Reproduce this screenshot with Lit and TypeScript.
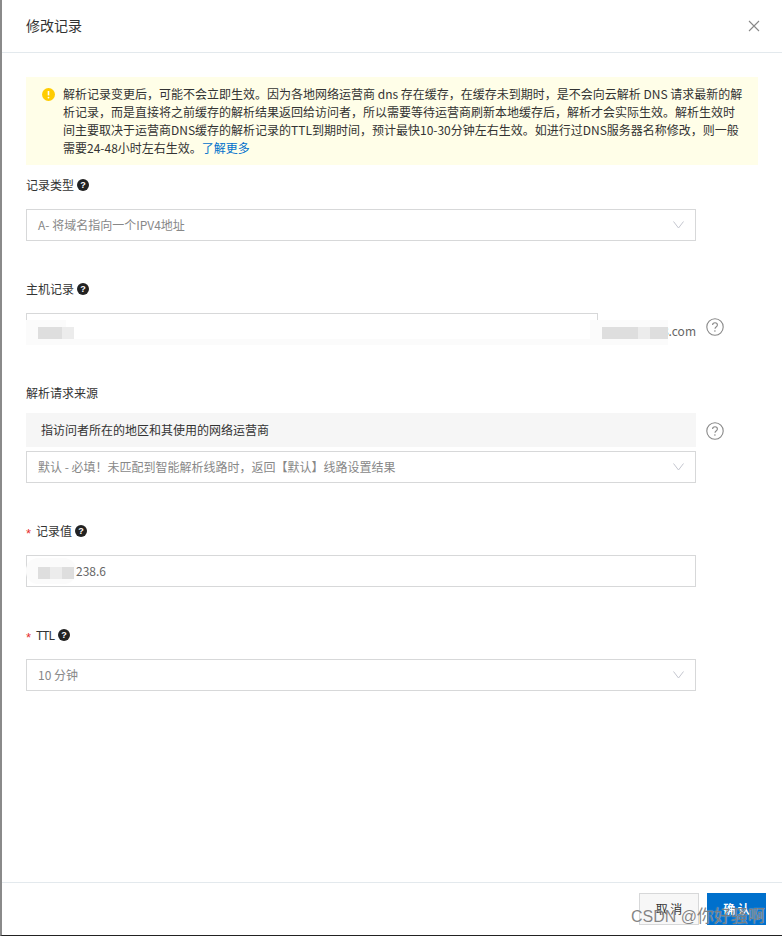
import { LitElement, html, css } from "lit";
import { customElement } from "lit/decorators.js";

const chevron = html`<svg class="chev" width="11" height="8" viewBox="0 0 11 8"><path d="M.5 .5l5 6.5 5-6.5" fill="none" stroke="#c4c6cf" stroke-width="1"/></svg>`;
const tip = html`<svg class="tip" width="12" height="12" viewBox="0 0 12 12"><circle cx="6" cy="6" r="6" fill="#222"/><text x="6" y="9.2" text-anchor="middle" font-size="9" font-weight="700" fill="#fff" font-family="Liberation Sans, sans-serif">?</text></svg>`;
const help = html`<svg class="help" width="18" height="18" viewBox="0 0 18 18"><circle cx="9" cy="9" r="8.2" fill="none" stroke="#888" stroke-width="1.1"/><path d="M6.6 7.1c0-1.4 1-2.3 2.4-2.3s2.4.9 2.4 2.2c0 1-.6 1.5-1.3 2-.7.5-1.1.9-1.1 1.8" fill="none" stroke="#888" stroke-width="1.1"/><circle cx="8.9" cy="13" r=".8" fill="#888"/></svg>`;

@customElement("app-root")
export class AppRoot extends LitElement {
  static styles = css`
    :host {
      display: flex;
      flex-direction: column;
      position: relative;
      width: 782px;
      height: 936px;
      box-sizing: border-box;
      overflow: hidden;
      background: #fff;
      border-left: 2px solid #8a8a8a;
      border-bottom: 1px solid #222;
      font-family: "Noto Sans CJK SC", "Liberation Sans", sans-serif;
      font-size: 12px;
      line-height: 18px;
      color: #333;
    }
    .head {
      height: 52px;
      flex: none;
      display: flex;
      align-items: center;
      justify-content: space-between;
      padding: 0 22px 0 24px;
      border-bottom: 1px solid #e3e9ed;
      font-size: 14px;
      box-sizing: content-box;
    }
    .title { margin-top: -3px; }
    .body {
      flex: 1;
      padding: 24px 24px 0;
    }
    .alert {
      display: flex;
      height: 88px;
      box-sizing: border-box;
      padding: 8px 0 8px 16px;
      gap: 8px;
      background: #fffee8;
      white-space: nowrap;
    }
    .warn { flex: none; margin-top: 3px; }
    a { color: #0070cc; text-decoration: none; }
    .label {
      display: flex;
      align-items: center;
      gap: 3px;
      height: 18px;
      margin-bottom: 15px;
    }
    .label .star {
      color: #e62e2e;
      width: 7px;
      font-family: "Liberation Sans", sans-serif;
      font-size: 13px;
      padding-top: 5px;
    }
    .ttl { letter-spacing: -1px; margin-right: 1px; }
    .field { margin-bottom: 39px; }
    .first { margin-top: 11px; }
    .short { margin-bottom: 11px; }
    .box {
      width: 670px;
      height: 32px;
      box-sizing: border-box;
      border: 1px solid #d7d8d9;
      padding: 0 11px;
      display: flex;
      align-items: center;
      justify-content: space-between;
      color: #888;
      background: #fff;
    }
    .row { display: flex; align-items: center; }
    .row .help { margin-left: 10px; flex: none; margin-top: 2px; }
    .host-row { height: 32px; width: 698px; justify-content: flex-start; }
    .host-row .help { margin-top: -4px; }
    .host-input { width: 572px; flex: none; }
    .suffix { flex: 1; text-align: right; color: #666; padding-top: 3px; }
    .bar {
      width: 670px;
      height: 34px;
      box-sizing: border-box;
      background: #f6f6f6;
      padding: 0 15px;
      display: flex;
      align-items: center;
    }
    .gap4 { margin-top: 4px; }
    .value { color: #666; padding-left: 38px; }
    .foot {
      flex: none;
      height: 53px;
      box-sizing: border-box;
      border-top: 1px solid #e3e9ed;
      padding: 10px 16px 0 0;
      display: flex;
      justify-content: flex-end;
      gap: 8px;
    }
    .btn {
      width: 60px;
      height: 32px;
      box-sizing: border-box;
      display: flex;
      align-items: center;
      justify-content: center;
      border: 1px solid #d7d8d9;
      background: #f7f7f7;
      color: #333;
    }
    .btn.primary {
      width: 59px;
      border-color: #0070cc;
      background: #0070cc;
      color: #fff;
      font-weight: 700;
    }
    /* overlays: redaction smears and the image watermark */
    .smear { position: absolute; background: #fbfbfb; }
    .px { position: absolute; background: #dedede; height: 12px; }
    .px.lt { background: #ececec; }
    .mark {
      position: absolute;
      left: 629px;
      top: 905px;
      font-family: "Liberation Sans", "Noto Sans CJK SC", sans-serif;
      font-size: 16px;
      line-height: 24px;
      color: rgba(115, 115, 115, 0.88);
      text-shadow: 0 0 1px rgba(255, 255, 255, 0.7);
      white-space: nowrap;
    }
    .mark span { font-size: 17px; }
  `;

  render() {
    return html`
      <div class="head">
        <span class="title">修改记录</span>
        <svg width="12" height="12" viewBox="0 0 12 12"><path d="M1 1l10 10M11 1L1 11" stroke="#888" stroke-width="1.1" fill="none"/></svg>
      </div>
      <div class="body">
        <div class="alert">
          <svg class="warn" width="13" height="13" viewBox="0 0 13 13"><circle cx="6.5" cy="6.5" r="6.5" fill="#fc0"/><path d="M6.5 3v4.4" stroke="#fff" stroke-width="1.6"/><circle cx="6.5" cy="9.6" r=".9" fill="#fff"/></svg>
          <div>解析记录变更后，可能不会立即生效。因为各地网络运营商 dns 存在缓存，在缓存未到期时，是不会向云解析 DNS 请求最新的解<br>析记录，而是直接将之前缓存的解析结果返回给访问者，所以需要等待运营商刷新本地缓存后，解析才会实际生效。解析生效时<br>间主要取决于运营商DNS缓存的解析记录的TTL到期时间，预计最快10-30分钟左右生效。如进行过DNS服务器名称修改，则一般<br>需要24-48小时左右生效。<a href="#">了解更多</a></div>
        </div>

        <div class="field first">
          <div class="label">记录类型 ${tip}</div>
          <div class="box"><span>A- 将域名指向一个IPV4地址</span>${chevron}</div>
        </div>

        <div class="field">
          <div class="label">主机记录 ${tip}</div>
          <div class="row host-row">
            <div class="box host-input"></div>
            <span class="suffix">8.com</span>
            ${help}
          </div>
        </div>

        <div class="field">
          <div class="label short">解析请求来源</div>
          <div class="row"><div class="bar">指访问者所在的地区和其使用的网络运营商</div>${help}</div>
          <div class="box gap4"><span>默认 - 必填！未匹配到智能解析线路时，返回【默认】线路设置结果</span>${chevron}</div>
        </div>

        <div class="field">
          <div class="label"><span class="star">*</span>记录值 ${tip}</div>
          <div class="box"><span class="value">238.6</span></div>
        </div>

        <div class="field">
          <div class="label"><span class="star">*</span><span class="ttl">TTL</span> ${tip}</div>
          <div class="box"><span>10 分钟</span>${chevron}</div>
        </div>
      </div>
      <div class="foot">
        <div class="btn">取 消</div>
        <div class="btn primary">确 认</div>
      </div>

      <div class="smear" style="left:24px;top:320px;width:40px;height:25px"></div>
      <div class="smear" style="left:24px;top:339px;width:574px;height:6px"></div>
      <div class="smear" style="left:588px;top:320px;width:78px;height:25px"></div>
      <div class="px" style="left:36px;top:327px;width:24px"></div>
      <div class="px lt" style="left:60px;top:327px;width:12px"></div>
      <div class="px" style="left:600px;top:327px;width:36px"></div>
      <div class="px lt" style="left:636px;top:327px;width:12px"></div>
      <div class="px" style="left:648px;top:327px;width:18px"></div>
      <div class="smear" style="left:24px;top:558px;width:50px;height:26px;border-radius:12px"></div>
      <div class="px" style="left:36px;top:567px;width:12px"></div>
      <div class="px lt" style="left:48px;top:567px;width:12px"></div>
      <div class="px" style="left:60px;top:567px;width:12px"></div>
      <div class="mark">CSDN @<span>你好骚啊</span></div>
    `;
  }
}
